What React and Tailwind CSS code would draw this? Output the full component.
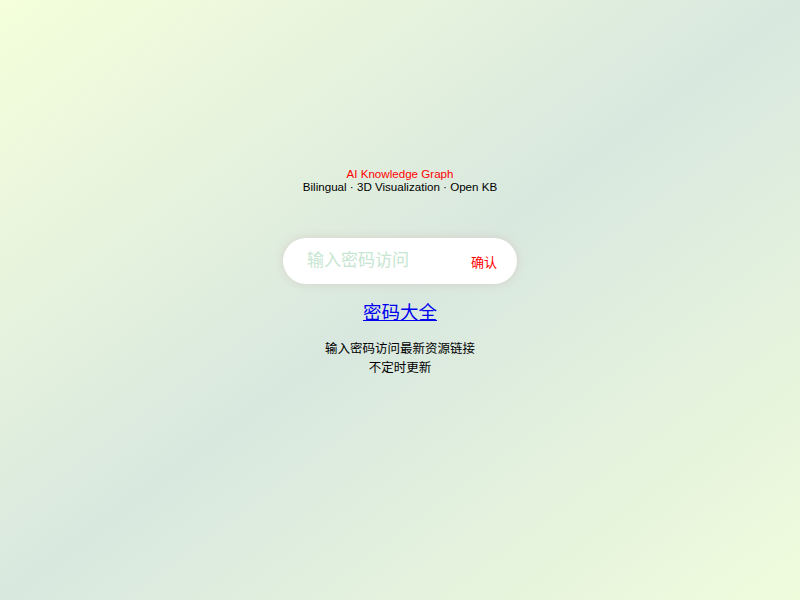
import React from "react";

const font = { fontFamily: '"Liberation Sans", Arial, "Noto Sans CJK SC", sans-serif' };

export default function App() {
  return (
    <div
      className="min-h-screen w-full flex flex-col items-center bg-gradient-to-br from-[#f5ffdb] via-[#d9e8df] to-[#effcdc] text-black"
      style={font}
    >
      <div className="pt-[167px] flex flex-col items-center text-[11.6px] leading-[13px]">
        <p className="text-[#ff0000]">AI Knowledge Graph</p>
        <p>Bilingual · 3D Visualization · Open KB</p>
      </div>

      <div className="mt-[45px] w-[234px] h-[46px] bg-white rounded-full flex items-center justify-between pl-[24px] pr-[20px] shadow-[0_0_10px_rgba(200,160,160,0.35)]">
        <input
          className="w-[120px] bg-transparent outline-none text-[17px] placeholder:text-[#c6e6d1]"
          placeholder="输入密码访问"
        />
        <button className="text-[#ff0000] text-[13px] mt-[3px]">确认</button>
      </div>

      <a href="#" className="mt-[16px] text-[18.5px] leading-[26px] text-[#0000ee] underline">
        密码大全
      </a>

      <div className="mt-[14px] flex flex-col items-center text-[12.5px] leading-[19px]">
        <p>输入密码访问最新资源链接</p>
        <p>不定时更新</p>
      </div>
    </div>
  );
}
